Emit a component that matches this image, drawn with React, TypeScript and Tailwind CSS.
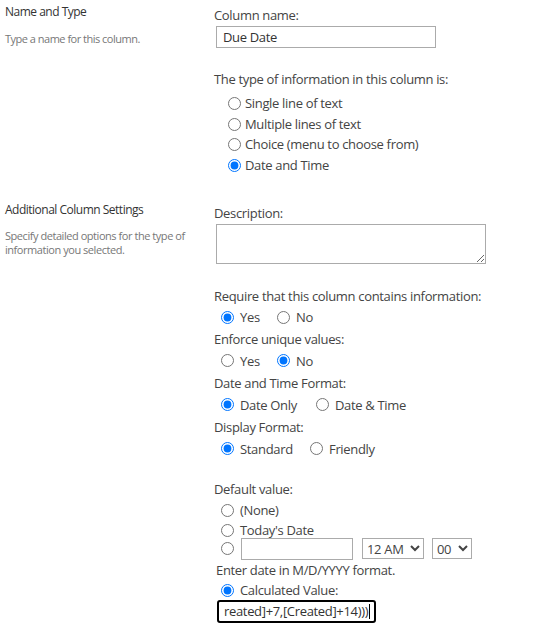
import React from "react";

const font = { fontFamily: '"Open Sans", "Noto Sans", sans-serif' };

const Radio = ({ checked = false, name }: { checked?: boolean; name: string }) => (
  <input
    type="radio"
    name={name}
    defaultChecked={checked}
    className="m-0 h-[13px] w-[13px] shrink-0 accent-[#0075ff]"
  />
);

const Option = ({
  label,
  checked,
  name,
  className = "gap-[6px]",
}: {
  label: string;
  checked?: boolean;
  name: string;
  className?: string;
}) => (
  <label className={`flex items-center ${className}`}>
    <Radio checked={checked} name={name} />
    <span>{label}</span>
  </label>
);

export default function App() {
  return (
    <div
      className="min-h-screen w-[539px] bg-white text-[13px] tracking-[-0.33px] text-[#444]"
      style={font}
    >
      {/* Name and Type */}
      <div className="flex">
        <div className="w-[214px] shrink-0 pl-[5px] pt-[3px]">
          <div className="text-[12px] leading-[18px] tracking-[-0.5px] text-[#333]">
            Name and Type
          </div>
          <div className="mt-[11px] text-[11px] leading-[14px] tracking-[-0.5px] text-[#777]">
            Type a name for this column.
          </div>
        </div>
        <div className="flex-1 pt-[5px]">
          <div className="leading-[21px]">Column name:</div>
          <input
            type="text"
            defaultValue="Due Date"
            className="ml-[2px] h-[22px] w-[220px] border border-[#ababab] px-[6px] text-[13px] tracking-[-0.33px] text-[#333] outline-none"
            style={font}
          />
          <div className="mt-[21px] leading-[21px]">
            The type of information in this column is:
          </div>
          <div className="mt-[3px] pl-[14px] leading-[20.7px]">
            <Option name="type" label="Single line of text" className="gap-[4px]" />
            <Option name="type" label="Multiple lines of text" className="gap-[4px]" />
            <Option name="type" label="Choice (menu to choose from)" className="gap-[4px]" />
            <Option name="type" label="Date and Time" checked className="gap-[4px]" />
          </div>
        </div>
      </div>

      {/* Additional Column Settings */}
      <div className="mt-[25px] flex">
        <div className="w-[214px] shrink-0 pl-[5px]">
          <div className="text-[12px] leading-[18px] tracking-[-0.5px] text-[#333]">
            Additional Column Settings
          </div>
          <div className="mt-[10px] text-[11px] leading-[14px] tracking-[-0.45px] text-[#777]">
            Specify detailed options for the type of
            <br />
            information you selected.
          </div>
        </div>
        <div className="flex-1 pt-[2px]">
          <div className="leading-[21px]">Description:</div>
          <textarea
            className="ml-[2px] block h-[40px] w-[270px] border border-[#ababab] outline-none"
            style={font}
          />
          <div className="mt-[21px] leading-[22px]">
            Require that this column contains information:
          </div>
          <div className="flex pl-[7px] leading-[21px]">
            <Option name="req" label="Yes" checked className="w-[56px] gap-[6px]" />
            <Option name="req" label="No" />
          </div>
          <div className="leading-[22px]">Enforce unique values:</div>
          <div className="flex pl-[7px] leading-[22px]">
            <Option name="uniq" label="Yes" className="w-[56px] gap-[6px]" />
            <Option name="uniq" label="No" checked />
          </div>
          <div className="leading-[22px]">Date and Time Format:</div>
          <div className="flex pl-[7px] leading-[22px]">
            <Option name="fmt" label="Date Only" checked className="w-[95px] gap-[6px]" />
            <Option name="fmt" label="Date & Time" />
          </div>
          <div className="leading-[22px]">Display Format:</div>
          <div className="flex pl-[7px] leading-[22px]">
            <Option name="disp" label="Standard" checked className="w-[89px] gap-[6px]" />
            <Option name="disp" label="Friendly" />
          </div>

          <div className="mt-[18px] leading-[22px]">Default value:</div>
          <div className="pl-[7px]">
            <Option name="def" label="(None)" className="mt-[1px] h-[20px] gap-[6px]" />
            <Option name="def" label="Today's Date" className="h-[19px] gap-[6px]" />
            <div className="mt-[-2px] flex h-[22px] items-center">
              <Radio name="def" />
              <input
                type="text"
                className="ml-[7px] h-[22px] w-[112px] border border-[#ababab] outline-none"
              />
              <select
                defaultValue="12 AM"
                className="ml-[9px] h-[21px] w-[62px] border border-[#ababab] bg-white text-[13px] tracking-[-0.33px] text-[#444]"
                style={font}
              >
                <option>12 AM</option>
              </select>
              <select
                defaultValue="00"
                className="ml-[8px] h-[21px] w-[40px] border border-[#ababab] bg-white text-[13px] tracking-[-0.33px] text-[#444]"
                style={font}
              >
                <option>00</option>
              </select>
            </div>
          </div>
          <div className="ml-[2px] h-[21px] leading-[21px]">Enter date in M/D/YYYY format.</div>
          <div className="pl-[7px]">
            <Option name="def2" label="Calculated Value:" checked className="mt-[1px] h-[18px] gap-[6px]" />
          </div>
          <div className="ml-[3px] flex h-[23px] w-[159px] items-center overflow-hidden whitespace-nowrap rounded-[3px] border-2 border-black pl-[5px] text-[#333]">
            <span>reated]+7,[Created]+14)))</span>
            <span className="ml-[1px] h-[15px] w-px shrink-0 bg-black" />
          </div>
        </div>
      </div>
    </div>
  );
}
